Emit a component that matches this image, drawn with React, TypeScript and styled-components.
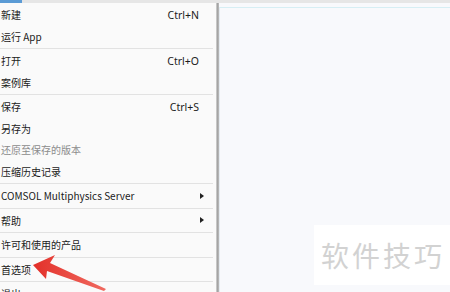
import styled, { createGlobalStyle } from "styled-components"

const GlobalStyle = createGlobalStyle`
    html, body {
        margin: 0;
        padding: 0;
        width: 450px;
        height: 292px;
        overflow: hidden;
        background: #f8f9fc;
    }
`

type Item = { label: string, shortcut?: string, sub?: boolean, disabled?: boolean }

const groups: Item[][] = [
    [{ label: "新建", shortcut: "Ctrl+N" }, { label: "运行 App" }],
    [{ label: "打开", shortcut: "Ctrl+O" }, { label: "案例库" }],
    [
        { label: "保存", shortcut: "Ctrl+S" },
        { label: "另存为" },
        { label: "还原至保存的版本", disabled: true },
        { label: "压缩历史记录" },
    ],
    [{ label: "COMSOL Multiphysics Server", sub: true }],
    [{ label: "帮助", sub: true }],
    [{ label: "许可和使用的产品" }],
    [{ label: "首选项" }],
    [{ label: "退出" }],
]

export default function App() {
    return (
        <>
            <GlobalStyle />
            <Page>
                <TopStrip>
                    <ActiveTab />
                </TopStrip>
                <Body>
                    <Menu>
                        {groups.map((group, gi) => (
                            <Group key={gi} $first={gi === 0}>
                                {group.map(item => (
                                    <Row key={item.label} $disabled={item.disabled}>
                                        <Label>{item.label}</Label>
                                        {item.shortcut && <Shortcut>{item.shortcut}</Shortcut>}
                                        {item.sub && <SubArrow />}
                                    </Row>
                                ))}
                            </Group>
                        ))}
                    </Menu>
                    <MenuShadow />
                    <Panel>
                        <Watermark>软件技巧</Watermark>
                    </Panel>
                </Body>
                <Arrow width="110" height="42" viewBox="0 0 110 42">
                    <defs>
                        <linearGradient id="redGrad" x1="0" y1="0" x2="1" y2="0">
                            <stop offset="0" stopColor="#e3302a" />
                            <stop offset="1" stopColor="#f06a60" />
                        </linearGradient>
                    </defs>
                    <polygon
                        points="33,15 55,5 50,13 106,39 104,41 47,21 46,29"
                        fill="url(#redGrad)"
                    />
                </Arrow>
            </Page>
        </>
    )
}

const Page = styled.div`
    position: relative;
    width: 450px;
    height: 292px;
    display: flex;
    flex-direction: column;
    font-family: "Noto Sans CJK SC", "Microsoft YaHei", sans-serif;
    font-size: 10px;
`

const TopStrip = styled.div`
    height: 3px;
    background: #e6e6e6;
    flex-shrink: 0;
`

const ActiveTab = styled.div`
    width: 22px;
    height: 3px;
    background: #5b9bd5;
`

const Body = styled.div`
    flex: 1;
    display: flex;
    min-height: 0;
`

const Menu = styled.div`
    width: 216px;
    background: #fafafa;
    padding-top: 1px;
    display: flex;
    flex-direction: column;
    flex-shrink: 0;
`

const Group = styled.div<{ $first?: boolean }>`
    border-top: ${props => (props.$first ? "none" : "1px solid #e2e2e2")};
    padding-top: ${props => (props.$first ? "0" : "1px")};
    margin-top: ${props => (props.$first ? "0" : "1px")};
    margin-right: 3px;
`

const Row = styled.div<{ $disabled?: boolean }>`
    height: 21.5px;
    display: flex;
    align-items: center;
    padding-left: 1px;
    padding-right: 14px;
    color: ${props => (props.$disabled ? "#8c8c8c" : "#1b1b1b")};
    white-space: nowrap;
`

const Label = styled.span`
    flex: 1;
`

const Shortcut = styled.span`
    color: #1b1b1b;
    font-family: "Noto Sans", sans-serif;
    font-size: 10.5px;
`

const SubArrow = styled.span`
    width: 0;
    height: 0;
    margin-right: -5px;
    border-top: 3.5px solid transparent;
    border-bottom: 3.5px solid transparent;
    border-left: 4px solid #222;
`

const MenuShadow = styled.div`
    width: 3px;
    flex-shrink: 0;
    background: linear-gradient(to right, #d8d8d8, #9a9a9a 60%, #c8c8c8);
`

const Panel = styled.div`
    flex: 1;
    position: relative;
    margin-top: 4px;
    border-top: 1px solid #d6eef4;
    border-left: 1px solid #e4eaf0;
    background: #f8f9fc;
`

const Watermark = styled.div`
    position: absolute;
    right: 0;
    bottom: 7px;
    width: 136px;
    height: 60px;
    background: #ffffff;
    color: #d2d2d2;
    font-size: 28px;
    letter-spacing: 3px;
    display: flex;
    align-items: center;
    padding-left: 7px;
    box-sizing: border-box;
`

const Arrow = styled.svg`
    position: absolute;
    left: 0;
    top: 250px;
`
